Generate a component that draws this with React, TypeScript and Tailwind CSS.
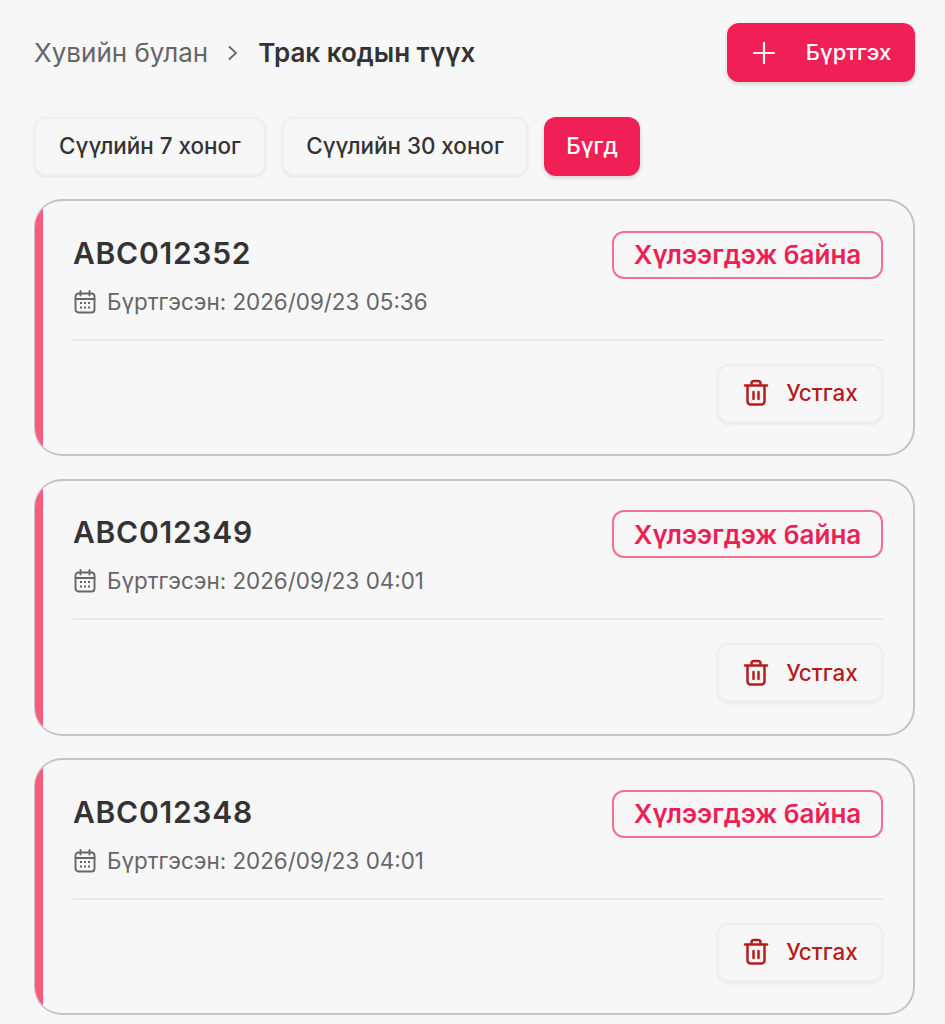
import React from "react";

const items = [
  { code: "ABC012352", date: "2026/09/23 05:36" },
  { code: "ABC012349", date: "2026/09/23 04:01" },
  { code: "ABC012348", date: "2026/09/23 04:01" },
];

function CalendarIcon() {
  return (
    <svg width="24" height="26" viewBox="0 0 24 26" fill="none" stroke="#666666" strokeWidth="1.9" strokeLinecap="round" className="shrink-0">
      <rect x="2.500" y="4.500" width="19" height="19" rx="3" />
      <path d="M2.500 10h19M7.500 2v4.500M16.500 2v4.500" />
      <g fill="#666666" stroke="none">
        <rect x="7" y="13" width="2" height="2" />
        <rect x="11" y="13" width="2" height="2" />
        <rect x="15" y="13" width="2" height="2" />
        <rect x="7" y="17.500" width="2" height="2" />
        <rect x="11" y="17.500" width="2" height="2" />
        <rect x="15" y="17.500" width="2" height="2" />
      </g>
    </svg>
  );
}

function TrashIcon() {
  return (
    <svg width="26" height="28" viewBox="0 0 26 28" fill="none" stroke="#b71c1c" strokeWidth="2.500" strokeLinecap="round" strokeLinejoin="round" className="shrink-0">
      <path d="M2 6.500h22" />
      <path d="M8.500 6V4.500a2.500 2.500 0 0 1 2.500-2.500h4a2.500 2.500 0 0 1 2.500 2.500V6" />
      <path d="M4.500 7v15.500a3 3 0 0 0 3 3h11a3 3 0 0 0 3-3V7" />
      <path d="M10.500 13v7M15.500 13v7" />
    </svg>
  );
}

function Card({ code, date }: { code: string; date: string }) {
  return (
    <div className="flex h-[257px] overflow-hidden rounded-[28px] border-2 border-l border-[#c4c4c4] bg-[#f7f7f7]">
      <div className="w-[8px] shrink-0 bg-[#fb5a7c]" />
      <div className="flex-1 pl-[30px] pr-[30px] pt-[29.750px]">
        <div className="flex items-start justify-between">
          <div>
            <div className="text-[30px] font-semibold leading-[44px] tracking-[0.75px] text-[#333333]">{code}</div>
            <div className="mt-[11px] flex h-[32px] items-center gap-[10px] text-[22.400px] text-[#666666]">
              <CalendarIcon />
              <span>Бүртгэсэн: {date}</span>
            </div>
          </div>
          <div className="flex h-[48px] w-[271px] items-center justify-center rounded-[12px] border-2 border-[#f5708f] text-[26px] font-semibold text-[#ec1f56]">
            Хүлээгдэж байна
          </div>
        </div>
        <div className="mt-[21px] h-[2px] bg-[#e8e8e8]" />
        <div className="mt-[23px] flex justify-end">
          <button className="flex h-[59px] w-[166px] items-center justify-center gap-[17px] rounded-[12px] border-2 border-[#efefef] bg-[#f7f7f7] pl-[1px] text-[22.400px] font-[450] text-[#b71c1c] shadow-[0_1px_3px_rgba(0,0,0,0.08)]">
            <TrashIcon />
            Устгах
          </button>
        </div>
      </div>
    </div>
  );
}

export default function App() {
  return (
    <div className="min-h-[1024px] overflow-hidden bg-[#f7f7f7] pl-[34px] pr-[30px] pt-[23px] font-['Inter',sans-serif]">
      <div className="flex h-[59px] items-center justify-between">
        <div className="flex items-center text-[26px]">
          <span className="text-[#666666]">Хувийн булан</span>
          <svg width="16" height="16" viewBox="0 0 16 16" fill="none" stroke="#666666" strokeWidth="1.800" className="mx-[17px]">
            <path d="M4 1.500l7 6.500-7 6.500" />
          </svg>
          <span className="font-semibold text-[#333333]">Трак кодын түүх</span>
        </div>
        <button className="flex h-[59px] w-[188px] items-center justify-center gap-[31px] rounded-[12px] bg-[#f01f56] pl-[2px] text-[22px] font-[450] text-white shadow-[0_2px_4px_rgba(0,0,0,0.15)]">
          <svg width="22" height="22" viewBox="0 0 22 22" stroke="white" strokeWidth="2.200" strokeLinecap="round">
            <path d="M11 1v20M1 11h20" />
          </svg>
          Бүртгэх
        </button>
      </div>

      <div className="mt-[35px] flex gap-[16px]">
        <button className="flex h-[59px] w-[232px] items-center justify-center rounded-[12px] border-2 border-[#efefef] bg-[#f7f7f7] pb-[2px] text-[22.400px] font-[450] text-[#333333] shadow-[0_1px_3px_rgba(0,0,0,0.08)]">
          Сүүлийн 7 хоног
        </button>
        <button className="flex h-[59px] w-[246px] items-center justify-center rounded-[12px] border-2 border-[#efefef] bg-[#f7f7f7] pb-[2px] text-[22.400px] font-[450] text-[#333333] shadow-[0_1px_3px_rgba(0,0,0,0.08)]">
          Сүүлийн 30 хоног
        </button>
        <button className="flex h-[59px] w-[96px] items-center justify-center rounded-[12px] bg-[#f01f56] pb-[2px] text-[22.400px] font-[450] text-white shadow-[0_2px_4px_rgba(0,0,0,0.15)]">
          Бүгд
        </button>
      </div>

      <div className="mt-[23px] flex flex-col gap-[22.500px]">
        {items.map((it) => (
          <Card key={it.code} code={it.code} date={it.date} />
        ))}
      </div>
    </div>
  );
}
